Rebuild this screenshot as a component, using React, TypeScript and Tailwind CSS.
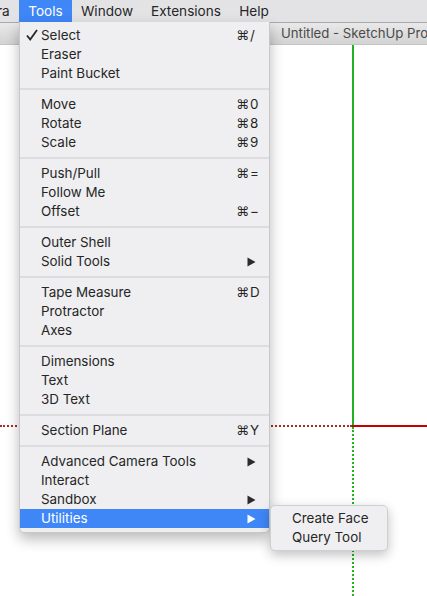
import React from "react";

type Item = { label: string; key?: string; sub?: boolean; checked?: boolean; active?: boolean };

const groups: Item[][] = [
  [{ label: "Select", key: "/", checked: true }, { label: "Eraser" }, { label: "Paint Bucket" }],
  [
    { label: "Move", key: "0" },
    { label: "Rotate", key: "8" },
    { label: "Scale", key: "9" },
  ],
  [{ label: "Push/Pull", key: "=" }, { label: "Follow Me" }, { label: "Offset", key: "−" }],
  [{ label: "Outer Shell" }, { label: "Solid Tools", sub: true }],
  [{ label: "Tape Measure", key: "D" }, { label: "Protractor" }, { label: "Axes" }],
  [{ label: "Dimensions" }, { label: "Text" }, { label: "3D Text" }],
  [{ label: "Section Plane", key: "Y" }],
  [
    { label: "Advanced Camera Tools", sub: true },
    { label: "Interact" },
    { label: "Sandbox", sub: true },
    { label: "Utilities", sub: true, active: true },
  ],
];

const font = "font-['Inter','Liberation_Sans',sans-serif]";

const Arrow = ({ white }: { white?: boolean }) => (
  <svg width="9" height="10" viewBox="0 0 9 10" className="mr-[1px]">
    <path d="M0.5 0.5 L8.5 5 L0.5 9.5 Z" fill={white ? "#ffffff" : "#2b2b2b"} />
  </svg>
);

const MenuRow = ({ item }: { item: Item }) => (
  <div
    className={`relative flex h-[19px] items-center pl-[21px] pr-[12px] text-[13.4px] ${
      item.active ? "bg-[#3f86f7] text-white" : "text-[#262626]"
    }`}
  >
    {item.checked && (
      <svg width="12" height="12" viewBox="0 0 12 12" className="absolute left-[6px] top-[3px]">
        <path d="M1 6.5 L4.2 10.5 L11 1" fill="none" stroke="#262626" strokeWidth="1.8" />
      </svg>
    )}
    <span className="flex-1 whitespace-nowrap">{item.label}</span>
    {item.key && (
      <span className="flex w-[21px] items-center">
        <span className="font-['DejaVu_Sans'] text-[13px] leading-none">⌘</span>
        <span className="ml-[1px]">{item.key}</span>
      </span>
    )}
    {item.sub && <Arrow white={item.active} />}
  </div>
);

export default function App() {
  return (
    <div className={`relative flex h-[596px] w-[427px] flex-col overflow-hidden bg-white ${font}`}>
      <div className="flex h-[23px] shrink-0 items-center border-b border-[#a9a9ab] bg-[#e3e3e6] text-[13.6px] text-[#262626]">
        <span className="-ml-[3px] w-[22px]">ra</span>
        <span className="flex h-full w-[53px] items-center justify-center bg-[#3f86f7] text-white">Tools</span>
        <span className="flex w-[70px] justify-center">Window</span>
        <span className="flex w-[88px] justify-center">Extensions</span>
        <span className="flex w-[48px] justify-center">Help</span>
      </div>
      <div className="flex h-[22px] shrink-0 items-center border-b border-[#c4c4c4] bg-gradient-to-b from-[#e9e9e9] to-[#d3d3d3] pl-[281px] text-[13.2px] whitespace-nowrap text-[#4a4a4a]">
        Untitled - SketchUp Pro
      </div>
      <div className="relative flex-1">
        <div className="absolute left-[352px] top-0 h-[381px] w-[2px] bg-[#1fb31f]" />
        <div className="absolute left-[352px] top-[380px] h-[2px] w-[80px] bg-[#c40000]" />
        <div className="absolute left-0 top-[380px] w-[352px] border-t-[2px] border-dotted border-[#a82a2a]" />
        <div className="absolute left-[352px] top-[382px] h-[180px] border-l-[2px] border-dotted border-[#1fb31f]" />
      </div>

      <div className="absolute left-[19px] top-[22px] w-[251px] rounded-b-[5px] border-r border-b border-l border-[#c8c8ca] bg-[#efeff1] pt-[4px] pb-[4px] shadow-[0_6px_14px_rgba(0,0,0,0.28)]">
        {groups.map((g, gi) => (
          <div key={gi}>
            {gi > 0 && <div className="my-[5px] h-[2px] bg-[#dcdcde]" />}
            {g.map((item) => (
              <MenuRow key={item.label} item={item} />
            ))}
          </div>
        ))}
      </div>

      <div className="absolute left-[270px] top-[505px] w-[118px] rounded-[5px] border border-[#cfcfd1] bg-[#efeff1] py-[3px] shadow-[0_4px_12px_rgba(0,0,0,0.25)]">
        <div className="flex h-[19px] items-center pl-[21px] text-[13.4px] text-[#262626]">Create Face</div>
        <div className="flex h-[19px] items-center pl-[21px] text-[13.4px] text-[#262626]">Query Tool</div>
      </div>
    </div>
  );
}
